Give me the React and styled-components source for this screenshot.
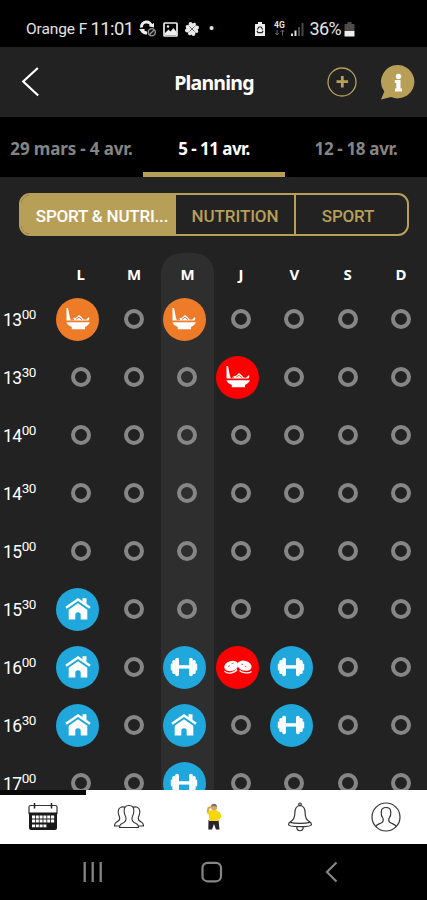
import React from 'react';
import styled, { createGlobalStyle, css } from 'styled-components';

const GOLD = '#b89f58';

const GlobalStyle = createGlobalStyle`
  *, *::before, *::after { box-sizing: border-box; }
  body { margin: 0; background: #000; }
  button { margin: 0; padding: 0; border: 0; background: none; color: inherit; font: inherit; }
  svg { display: block; flex: none; }
`;

const Screen = styled.div`
  width: 427px;
  height: 900px;
  display: flex;
  flex-direction: column;
  overflow: hidden;
  background: #222;
  color: #fff;
  font-family: Roboto, sans-serif;
`;

const StatusBar = styled.div`
  height: 47px;
  flex: none;
  display: flex;
  align-items: center;
  padding: 11px 0 0 26px;
  background: #000;
  color: #e4e4e4;
  white-space: nowrap;
`;

const StatusText = styled.span`
  width: ${(p) => p.$w}px;
  flex: none;
  font-size: ${(p) => p.$size}px;
  line-height: 24px;
  letter-spacing: ${(p) => p.$spacing || 0}px;
`;

const StatusIcon = styled.span`
  flex: none;
  margin-right: ${(p) => p.$gap}px;
`;

const Header = styled.header`
  height: 70px;
  flex: none;
  display: grid;
  grid-template-columns: 143px 142px 1fr;
  align-items: center;
  background: #222;
`;

const BackButton = styled.button`
  justify-self: start;
  margin-left: 21px;
`;

const Title = styled.h1`
  margin: 2px 0 0;
  text-align: center;
  font: 700 19.5px/28px 'Noto Sans', sans-serif;
  letter-spacing: -0.8px;
`;

const HeaderActions = styled.div`
  display: flex;
  justify-content: flex-end;
  align-items: center;
  gap: 23px;
  padding-right: 11px;
`;

const Weeks = styled.nav`
  height: 60px;
  flex: none;
  display: grid;
  grid-template-columns: 143px 142px 142px;
  background: #000;
`;

const Week = styled.button`
  padding-top: 8px;
  border-bottom: 5px solid ${(p) => (p.$active ? GOLD : 'transparent')};
  color: ${(p) => (p.$active ? '#fff' : '#858585')};
  font: 700 17px/24px 'Noto Sans', sans-serif;
  letter-spacing: ${(p) => p.$spacing}px;
  white-space: nowrap;
`;

const Filters = styled.div`
  height: 43px;
  flex: none;
  display: grid;
  grid-template-columns: 155px 118px 1fr;
  margin: 16px 18px 1px 19px;
  border: 2px solid ${GOLD};
  border-radius: 11px;
  overflow: hidden;
`;

const Filter = styled.button`
  overflow: hidden;
  text-overflow: ellipsis;
  white-space: nowrap;
  padding: 2px ${(p) => p.$right || 0}px 0 ${(p) => p.$left || 0}px;
  font-size: 17px;
  font-weight: 500;
  letter-spacing: ${(p) => p.$spacing || 0}px;
  color: ${(p) => (p.$active ? '#fff' : GOLD)};
  background: ${(p) => (p.$active ? GOLD : 'transparent')};
  & + & + & { border-left: 2px solid ${GOLD}; }
`;

const Planner = styled.main`
  height: 553px;
  flex: none;
  display: grid;
  grid-template-columns: 54px repeat(7, 53.4px);
  padding-top: 16px;
  overflow: hidden;
`;

const column = css`
  display: grid;
  grid-template-rows: 37px repeat(9, 58.05px);
`;

const Hours = styled.div`
  ${column}
`;

const Hour = styled.div`
  display: flex;
  align-items: center;
  padding: 2px 0 0 3px;
  font-size: 17.5px;
  letter-spacing: -0.7px;
`;

const Minutes = styled.span`
  font-size: 13.5px;
  margin: -13px 0 0 0.5px;
  letter-spacing: -0.5px;
`;

const Day = styled.div`
  ${column}
  height: 560px;
  border-radius: 20px 20px 0 0;
  background: ${(p) => (p.$today ? '#2e2e2e' : 'transparent')};
`;

const DayName = styled.div`
  text-align: center;
  padding-top: 9px;
  font: 700 15px/24px 'Noto Sans', sans-serif;
`;

const Slot = styled.button`
  display: grid;
  place-items: center;
`;

const EmptyRing = styled.span`
  width: 20px;
  height: 20px;
  border: 4px solid #868686;
  border-radius: 50%;
`;

const Activity = styled.span`
  width: 43px;
  height: 43px;
  margin-right: 6px;
  display: grid;
  place-items: center;
  border-radius: 50%;
  background: ${(p) => p.$color};
`;

const AppNav = styled.nav`
  height: 54px;
  flex: none;
  display: grid;
  grid-template-columns: repeat(5, 85.6px);
  background: #fff;
  color: #222;
`;

const NavItem = styled.button`
  display: grid;
  place-items: center;
  padding: 0 0 5px 1px;
  border-top: 5px solid ${(p) => (p.$active ? '#080808' : 'transparent')};
`;

const SystemNav = styled.div`
  height: 56px;
  flex: none;
  display: grid;
  grid-template-columns: 185px 53px 187px;
  align-items: center;
  justify-items: center;
  background: #000;
  color: #858585;
`;

const BowlIcon = () => (
  <svg width="26" height="26" viewBox="0 0 26 26" fill="#fff">
    <path d="M1.500 2 3 2l2 10 1 2.500H1.500Z" />
    <path d="m6 14.500 3-2.400 2-.3 3-2.800 2.500 2 2 2.500 2.700 .2 2.300-2.500 1 .8-1 2.500Z" />
    <path d="m11 13.300 3-2 3 2.300m-10 .4 2-.8" fill="none" stroke="#e75b28" strokeWidth=".9" />
    <path d="M1.500 16.200h23.200c-.3 2-2.200 3.400-4.700 4.800v2.300H6.800V21c-2.700-1.300-4.800-2.800-5.300-4.800Z" />
  </svg>
);

const HouseIcon = () => (
  <svg width="26" height="26" viewBox="0 0 26 26">
    <path d="m1 11.800 12-8.300 12 8.300" fill="none" stroke="#fff" strokeWidth="2.500" />
    <path d="M17.500 2.200h4v6.500l-4-2.700Z" fill="#fff" />
    <path d="m13 7.300 9.300 6.500v9.700h-6.600V19a2.700 2.700 0 0 0-5.400 0v4.500H3.700v-9.700Z" fill="#fff" />
  </svg>
);

const DumbbellIcon = () => (
  <svg width="28" height="22" viewBox="0 0 28 22" fill="#fff">
    <rect x="8" y="9.200" width="12" height="3.400" />
    <rect x="5.200" y="1.700" width="3.800" height="18.600" rx="1.800" />
    <rect x="19" y="1.700" width="3.800" height="18.600" rx="1.800" />
    <rect x="2.300" y="4" width="3.300" height="14" rx="1.500" />
    <rect x="22.400" y="4" width="3.300" height="14" rx="1.500" />
    <rect x=".8" y="7.500" width="2" height="7" rx="1" />
    <rect x="25.200" y="7.500" width="2" height="7" rx="1" />
  </svg>
);

const SteakIcon = () => (
  <svg width="30" height="20" viewBox="0 0 30 20" fill="#fff">
    <ellipse cx="8.300" cy="9" rx="7.200" ry="4.900" transform="rotate(-16 8.300 9)" />
    <ellipse cx="21.500" cy="8.700" rx="7.200" ry="4.900" transform="rotate(16 21.500 8.700)" />
    <path d="M1.500 14c2 3.500 9.500 2.500 12.500-1.500m2.500 1c2.500 2.500 9 3.500 12 1" fill="none" stroke="#fff" strokeWidth="1.300" />
    <path d="m5 9.500 2-.8m1.500-1.800 2-.7m7.500.8 2 .6m1.500 1.500 2 .8" stroke="#e55" strokeWidth=".9" />
  </svg>
);

const ACTIVITIES = {
  meal: { color: '#ed7b27', Icon: BowlIcon },
  mealAlert: { color: '#fe0000', Icon: BowlIcon },
  snackAlert: { color: '#fe0000', Icon: SteakIcon },
  home: { color: '#20a7db', Icon: HouseIcon },
  gym: { color: '#20a7db', Icon: DumbbellIcon },
};

const HOURS = [
  ['13', '00'], ['13', '30'], ['14', '00'], ['14', '30'], ['15', '00'],
  ['15', '30'], ['16', '00'], ['16', '30'], ['17', '00'],
];

const DAYS = [
  { name: 'L', plan: { 0: 'meal', 5: 'home', 6: 'home', 7: 'home' } },
  { name: 'M', plan: {} },
  { name: 'M', today: true, plan: { 0: 'meal', 6: 'gym', 7: 'home', 8: 'gym' } },
  { name: 'J', plan: { 1: 'mealAlert', 6: 'snackAlert' } },
  { name: 'V', plan: { 6: 'gym', 7: 'gym' } },
  { name: 'S', plan: {} },
  { name: 'D', plan: {} },
];

function SlotContent({ type }) {
  if (!type) return <EmptyRing />;
  const { color, Icon } = ACTIVITIES[type];
  return <Activity $color={color}><Icon /></Activity>;
}

const SyncIcon = () => (
  <svg width="18" height="18" viewBox="0 0 18 18" fill="none">
    <path d="M2.500 7.500a5 5 0 0 1 10-1M3 9.500a5 5 0 0 0 5 3.500" stroke="#eee" strokeWidth="3" />
    <path d="m9.500 6 5.500 1.500V3ZM0 9h6L3 13Z" fill="#eee" />
    <circle cx="12.800" cy="12.300" r="3.600" fill="#111" stroke="#999" strokeWidth="1.300" />
    <path d="m10.500 14.500 4.700-4.500" stroke="#999" strokeWidth="1.300" />
  </svg>
);

const PhotoIcon = () => (
  <svg width="15" height="15" viewBox="0 0 15 15">
    <rect x="1" y="1" width="13" height="13" rx=".8" fill="none" stroke="#eee" strokeWidth="1.700" />
    <path d="m2 11 3.500-3.500L7.500 9.500 10.500 6l3 4v3H2Z" fill="#eee" />
    <circle cx="5" cy="4.500" r="1.200" fill="#eee" />
  </svg>
);

const CloverIcon = () => (
  <svg width="16" height="16" viewBox="0 0 16 16" fill="#e8e8e8">
    <path d="M8 8C3.500 6 4 1 6.500 1 8 1 8.500 2.500 8.500 2.500S10.500 1 11.500 2.200C13 4 10.500 7 8 8Z" />
    <path d="M8 8c2-4.500 7-4 7-1.500 0 1.500-1.500 2-1.500 2s1.500 2 .3 3C12 13 9 10.500 8 8Z" />
    <path d="M8 8c4.500 2 4 7 1.500 7-1.500 0-2-1.500-2-1.500s-2 1.500-3 .3C3 12 5.500 9 8 8Z" />
    <path d="M8 8c-2 4.500-7 4-7 1.500C1 8 2.500 7.500 2.500 7.500S1 5.500 2.200 4.500C4 3 7 5.500 8 8Z" />
    <path d="m5.500 5.500 5 5m0-5-5 5" stroke="#111" strokeWidth=".6" />
  </svg>
);

const SaverIcon = () => (
  <svg width="12" height="16" viewBox="0 0 12 16">
    <path d="M4 1h4v2h2.500q.5 0 .5.500v11q0 .5-.5.500h-9q-.5 0-.5-.5v-11Q1 3 1.500 3H4Z" fill="#eee" />
    <path d="m3.300 8.500 1.700-2.500h2l1.700 2.500m.3 1.200-1 2H4l-1-2" fill="none" stroke="#222" strokeWidth="1.200" />
  </svg>
);

const NetworkIcon = () => (
  <svg width="12" height="16" viewBox="0 0 12 16">
    <text x="0" y="7" fontFamily="Roboto, sans-serif" fontWeight="700" fontSize="8.500" fill="#e5e5e5">4G</text>
    <path d="M3 9v5m-1.800-2L3 14l1.800-2M8.500 14.500V9m-1.800 2 1.800-2 1.800 2" fill="none" stroke="#666" strokeWidth="1" />
  </svg>
);

const SignalIcon = () => (
  <svg width="14" height="14" viewBox="0 0 14 14">
    <path d="M1 11.500h2V14H1ZM4.500 8.500h2V14h-2Z" fill="#ddd" />
    <path d="M8 5h2v9H8ZM11.500 1h2v13h-2Z" fill="#484848" />
  </svg>
);

const BatteryIcon = () => (
  <svg width="11" height="15" viewBox="0 0 11 15">
    <path d="M3.500 0h4v2H10q.5 0 .5.500V9H.5V2.500Q.5 2 1 2h2.500Z" fill="#4b4b4b" />
    <path d="M.5 9h10v5q0 .5-.5.500H1Q.5 14.500.5 14Z" fill="#eee" />
  </svg>
);

const BackIcon = () => (
  <svg width="20" height="32" viewBox="0 0 20 32" fill="none" stroke="#fff" strokeWidth="2.200">
    <path d="M16.800 2 2.200 15.500 17.200 29.500" />
  </svg>
);

const AddIcon = () => (
  <svg width="30" height="32" viewBox="0 0 30 32" fill="none" stroke={GOLD}>
    <circle cx="15" cy="16" r="14" strokeWidth="1.300" />
    <path d="M15.300 10v11.500M9.500 15.700h11.600" strokeWidth="2.800" />
  </svg>
);

const InfoIcon = () => (
  <svg width="36" height="36" viewBox="0 0 36 36">
    <path d="M18.500 1a16.700 16.700 0 1 1-7.500 32L1 35.500l3.300-8A16.700 16.700 0 0 1 18.500 1Z" fill={GOLD} />
    <circle cx="18.500" cy="12.500" r="2.700" fill="#fff" />
    <path d="M14.800 16h5.700v8.500H22v3h-7v-3h1.300v-5.500h-1.500Z" fill="#fff" />
  </svg>
);

const CalendarIcon = () => (
  <svg width="30" height="30" viewBox="0 0 30 30">
    <path d="M1 12V5q0-1.500 1.500-1.500h25Q29 3.500 29 5v7" fill="none" stroke="#333" strokeWidth="1.200" />
    <path d="M1 10.500h28V26q0 2-2 2H3q-2 0-2-2Z" fill="#19191b" />
    <path d="M6.500 1v5.500m17-5.500v5.500" stroke="#222" strokeWidth="1.500" />
    <path d="M4 15h23M4 19h23M4 23.800h15" fill="none" stroke="#fff" strokeWidth="2.800" strokeDasharray="3 .8" />
  </svg>
);

const PeopleIcon = () => (
  <svg width="30" height="26" viewBox="0 0 30 26" fill="#fff" stroke="#333" strokeWidth="1.100" strokeLinejoin="round">
    <path d="M12 4C8 1.500 4 3.500 4.200 8c.1 3 1.300 4 1.500 6 .2 2-.7 3-3 4-1.700.8-2.200 2-2.200 4h9" />
    <path d="M18 4c4-2.500 8-.5 7.800 4-.1 3-1.300 4-1.500 6-.2 2 .7 3 3 4 1.700.8 2.200 2 2.200 4h-9" />
    <path d="M15 1.500c-3.800 0-5.200 2.200-4.800 6.500.3 2.500 1.500 4.200 1.800 6 .2 3-1 4.500-4 5.500-2 .7-2.500 1.500-2.500 4h19c0-2.500-.5-3.300-2.500-4-3-1-4.200-2.500-4-5.500.3-1.800 1.500-3.500 1.800-6 .4-4.300-1-6.500-4.800-6.500Z" />
  </svg>
);

const CoachIcon = () => (
  <svg width="20" height="30" viewBox="0 0 20 30">
    <path d="M4.500 18h10l1 9.500h-3.500L10 22l-2 5.500H4.300Z" fill="#26232b" />
    <path d="M4 8.500 12 8l4 2.500 1.500 4-2 3-1-.5v2H5V13L2.500 11Z" fill="#f6d70b" />
    <circle cx="10" cy="5.500" r="3" fill="#dba36d" />
    <path d="M7 4.800c0-4 6-4 6 0l-3-.8Z" fill="#77715e" />
    <path d="m3.500 10 1-4L7 5" fill="none" stroke="#d5a850" strokeWidth="1.900" />
  </svg>
);

const BellIcon = () => (
  <svg width="26" height="30" viewBox="0 0 26 30" fill="none" stroke="#333" strokeWidth="1.200" strokeLinejoin="round">
    <path d="M13 3.500c-3.800.3-5.200 3.500-5.200 8 0 4-1.500 6.500-4 8C2.300 20.500 1.500 21 1.500 22.500c0 2.800 23 2.800 23 0 0-1.500-.8-2-2.300-3-2.500-1.500-4-4-4-8 0-4.500-1.400-7.700-5.200-8Z" />
    <circle cx="13" cy="2.300" r="1.300" />
    <path d="M3 20.300c5 1.400 15 1.400 20 0M9.800 25c0 5 6.400 5 6.400 0" />
  </svg>
);

const ProfileIcon = () => (
  <svg width="30" height="30" viewBox="0 0 30 30" fill="none" stroke="#333" strokeWidth="1.200">
    <circle cx="15" cy="15" r="14" />
    <path d="M5 24.500c.5-2 3-2.500 5-3.500 2.500-1 2.800-2 2-4.500-1.500-2-2-4-1.800-6.500.2-3 1.800-4.500 4.800-4.500s4.600 1.500 4.800 4.500c.2 2.500-.3 4.500-1.800 6.500-.8 2.500-.5 3.500 2 4.500 2 1 4.500 1.500 5 3.500" />
  </svg>
);

const RecentsIcon = () => (
  <svg width="20" height="22" viewBox="0 0 20 22" stroke="currentColor" strokeWidth="2.300">
    <path d="M1.700 1v20M9.700 1v20M17.700 1v20" />
  </svg>
);

const HomeKeyIcon = () => (
  <svg width="22" height="22" viewBox="0 0 22 22" fill="none" stroke="currentColor" strokeWidth="2.200">
    <rect x="1.500" y="1.800" width="18.500" height="18.500" rx="5" />
  </svg>
);

const BackKeyIcon = () => (
  <svg width="14" height="22" viewBox="0 0 14 22" fill="none" stroke="currentColor" strokeWidth="2.200">
    <path d="M11.500 1.500 2 11l9.500 9.500" />
  </svg>
);

const NAV = [
  ['Planning', CalendarIcon],
  ['Communauté', PeopleIcon],
  ['Coach', CoachIcon],
  ['Notifications', BellIcon],
  ['Profil', ProfileIcon],
];

export default function App() {
  return (
    <>
      <GlobalStyle />
      <Screen>
        <StatusBar>
          <StatusText $w={64.500} $size={15.500} $spacing={-0.1}>Orange F</StatusText>
          <StatusText $w={48} $size={18.500} $spacing={-0.6}>11:01</StatusText>
          <StatusIcon $gap={6}><SyncIcon /></StatusIcon>
          <StatusIcon $gap={6}><PhotoIcon /></StatusIcon>
          <StatusIcon $gap={9}><CloverIcon /></StatusIcon>
          <StatusText $w={45} $size={18}>•</StatusText>
          <StatusIcon $gap={8}><SaverIcon /></StatusIcon>
          <StatusIcon $gap={4}><NetworkIcon /></StatusIcon>
          <StatusIcon $gap={6}><SignalIcon /></StatusIcon>
          <StatusText $w={34} $size={18} $spacing={-0.6}>36%</StatusText>
          <StatusIcon $gap={0}><BatteryIcon /></StatusIcon>
        </StatusBar>

        <Header>
          <BackButton aria-label="Retour"><BackIcon /></BackButton>
          <Title>Planning</Title>
          <HeaderActions>
            <button aria-label="Ajouter"><AddIcon /></button>
            <button aria-label="Informations"><InfoIcon /></button>
          </HeaderActions>
        </Header>

        <Weeks>
          <Week $spacing={-0.15}>29 mars - 4 avr.</Week>
          <Week $active $spacing={-0.55}>5 - 11 avr.</Week>
          <Week $spacing={-0.35}>12 - 18 avr.</Week>
        </Weeks>

        <Filters>
          <Filter $active $left={7} $spacing={-0.2}>SPORT &amp; NUTRI...</Filter>
          <Filter $spacing={-0.1}>NUTRITION</Filter>
          <Filter $right={7} $spacing={-0.2}>SPORT</Filter>
        </Filters>

        <Planner>
          <Hours>
            <span />
            {HOURS.map(([h, m]) => (
              <Hour key={h + m}>{h}<Minutes>{m}</Minutes></Hour>
            ))}
          </Hours>
          {DAYS.map(({ name, today, plan }, d) => (
            <Day key={d} $today={today}>
              <DayName>{name}</DayName>
              {HOURS.map(([h, m], i) => (
                <Slot key={h + m}><SlotContent type={plan[i]} /></Slot>
              ))}
            </Day>
          ))}
        </Planner>

        <AppNav>
          {NAV.map(([label, Icon], i) => (
            <NavItem key={label} aria-label={label} $active={i === 0}><Icon /></NavItem>
          ))}
        </AppNav>

        <SystemNav>
          <RecentsIcon />
          <HomeKeyIcon />
          <BackKeyIcon />
        </SystemNav>
      </Screen>
    </>
  );
}
